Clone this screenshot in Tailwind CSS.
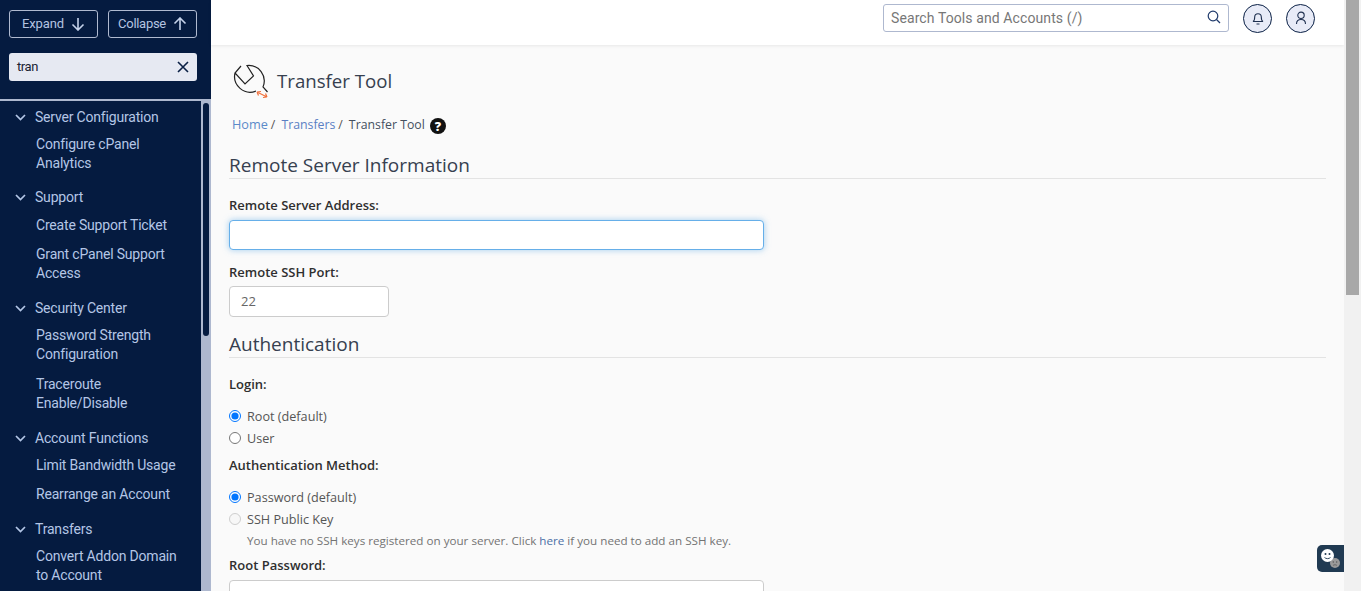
<!DOCTYPE html>
<html lang="en">
<head>
    <meta charset="UTF-8">
    <meta name="viewport" content="width=device-width, initial-scale=1.0">
    <title>Transfer Tool</title>
    <script src="https://cdn.jsdelivr.net/npm/@tailwindcss/browser@4"></script>
</head>
<body class="h-screen overflow-hidden bg-[#fafafa] font-['Open_Sans',sans-serif] text-[#333]">
<div class="flex h-[591px] overflow-hidden">
    <!-- sidebar -->
    <aside class="w-[211px] shrink-0 bg-[#051b40] font-['Roboto',sans-serif] flex flex-col h-[591px] overflow-hidden">
        <div class="h-[99px] shrink-0 px-[9px] pt-[10px]">
            <div class="flex gap-[10px]">
                <button class="w-[89px] h-[28px] border border-[#b0bad0] rounded-[3px] text-[#b4c3e0] text-[13px] tracking-[-0.1px] flex items-center justify-center gap-[7px]">Expand
                    <svg class="w-[14px] h-[14px]" viewBox="0 0 14 14" fill="none" stroke="#c5d2ea" stroke-width="1.6"><path d="M7 1v12M1.500 7.500 7 13l5.500-5.500"/></svg>
                </button>
                <button class="w-[89px] h-[28px] border border-[#b0bad0] rounded-[3px] text-[#b4c3e0] text-[13px] tracking-[-0.3px] flex items-center justify-center gap-[7px]">Collapse
                    <svg class="w-[14px] h-[14px]" viewBox="0 0 14 14" fill="none" stroke="#c5d2ea" stroke-width="1.6"><path d="M7 13V1M1.500 6.500 7 1l5.500 5.500"/></svg>
                </button>
            </div>
            <div class="mt-[15px] w-[188px] h-[28px] bg-[#e6e9f2] rounded-[3px] flex items-center justify-between pl-[8px] pr-[8px]">
                <span class="text-[13px] tracking-[-0.4px] text-[#1a2233]">tran</span>
                <svg class="w-[12px] h-[12px]" viewBox="0 0 12 12" fill="none" stroke="#0a2045" stroke-width="1.6"><path d="M1 1l10 10M11 1 1 11"/></svg>
            </div>
        </div>
        <div class="flex flex-1 border-t-2 border-[#aeb8cf] overflow-hidden">
            <nav class="w-[201px] shrink-0 text-[14px] leading-[19px] tracking-[-0.19px] text-[#b4c6e6]">
                <div class="flex items-center h-[19px] mt-[7px]">
                    <svg class="w-[11px] h-[7px] ml-[15px] mr-[9px]" viewBox="0 0 11 7" fill="none" stroke="#b4c6e6" stroke-width="1.7"><path d="M1 1l4.500 4.500L10 1"/></svg>
                    <span>Server Configuration</span>
                </div>
                <div class="pl-[36px] mt-[8px]">Configure cPanel<br>Analytics</div>
                <div class="flex items-center h-[19px] mt-[15px]">
                    <svg class="w-[11px] h-[7px] ml-[15px] mr-[9px]" viewBox="0 0 11 7" fill="none" stroke="#b4c6e6" stroke-width="1.7"><path d="M1 1l4.500 4.500L10 1"/></svg>
                    <span>Support</span>
                </div>
                <div class="pl-[36px] mt-[9px]">Create Support Ticket</div>
                <div class="pl-[36px] mt-[10px]">Grant cPanel Support<br>Access</div>
                <div class="flex items-center h-[19px] mt-[16px]">
                    <svg class="w-[11px] h-[7px] ml-[15px] mr-[9px]" viewBox="0 0 11 7" fill="none" stroke="#b4c6e6" stroke-width="1.7"><path d="M1 1l4.500 4.500L10 1"/></svg>
                    <span>Security Center</span>
                </div>
                <div class="pl-[36px] mt-[8px]">Password Strength<br>Configuration</div>
                <div class="pl-[36px] mt-[11px]">Traceroute<br>Enable/Disable</div>
                <div class="flex items-center h-[19px] mt-[16px]">
                    <svg class="w-[11px] h-[7px] ml-[15px] mr-[9px]" viewBox="0 0 11 7" fill="none" stroke="#b4c6e6" stroke-width="1.7"><path d="M1 1l4.500 4.500L10 1"/></svg>
                    <span>Account Functions</span>
                </div>
                <div class="pl-[36px] mt-[8px]">Limit Bandwidth Usage</div>
                <div class="pl-[36px] mt-[10px]">Rearrange an Account</div>
                <div class="flex items-center h-[19px] mt-[16px]">
                    <svg class="w-[11px] h-[7px] ml-[15px] mr-[9px]" viewBox="0 0 11 7" fill="none" stroke="#b4c6e6" stroke-width="1.7"><path d="M1 1l4.500 4.500L10 1"/></svg>
                    <span>Transfers</span>
                </div>
                <div class="pl-[36px] mt-[8px]">Convert Addon Domain<br>to Account</div>
            </nav>
            <div class="w-[10px] bg-[#aeb8cf] px-[2px] pt-[2px]">
                <div class="w-[6px] h-[233px] rounded-full bg-[#051b40]"></div>
            </div>
        </div>
    </aside>

    <!-- main -->
    <div class="flex-1 min-w-0 flex flex-col">
        <header class="h-[45px] shrink-0 bg-white shadow-[0_1px_3px_rgba(0,0,0,0.08)] flex items-center justify-end pr-[29px] pb-[9px]">
            <div class="w-[346px] h-[28px] border border-[#aeb8cf] rounded-[3px] flex items-center justify-between pl-[7px] pr-[7px] font-['Roboto',sans-serif] text-[14px] text-[#777] tracking-[0.1px]">
                <span>Search Tools and Accounts (/)</span>
                <svg class="w-[14px] h-[14px] -mt-[2px]" viewBox="0 0 14 14" fill="none" stroke="#1f3a6b" stroke-width="1.2"><circle cx="6" cy="6" r="4.800"/><path d="M9.500 9.500 13 13"/></svg>
            </div>
            <div class="ml-[14px] w-[29px] h-[29px] rounded-full border border-[#0a2045] bg-[#e8ebf7] flex items-center justify-center">
                <svg class="w-[14px] h-[14px]" viewBox="0 0 14 14" fill="none" stroke="#1f3050" stroke-width="1.100"><path d="M2 10.500c1-.5 1.700-1.500 1.700-4.500a3.300 3.300 0 0 1 6.600 0c0 3 .7 4 1.700 4.500zM5.500 13h3"/></svg>
            </div>
            <div class="ml-[14px] w-[29px] h-[29px] rounded-full border border-[#0a2045] bg-[#e8ebf7] flex items-center justify-center">
                <svg class="w-[14px] h-[14px]" viewBox="0 0 14 14" fill="none" stroke="#1f3050" stroke-width="1.100"><circle cx="7" cy="4.300" r="3.200"/><path d="M2.500 13c0-3 2-4.500 4.500-4.500s4.500 1.500 4.500 4.500"/></svg>
            </div>
        </header>

        <main class="flex-1 overflow-hidden pl-[18px] pr-[18px] relative">
            <div class="flex items-center mt-[18px] ml-[3px] h-[36px]">
                <svg class="w-[36px] h-[36px] overflow-visible" viewBox="0 0 36 36" fill="none">
                    <path d="M9 3 3 10 13 21 21.500 13 15 2.500A15.600 15.600 0 0 1 31 24L35.500 29M3 10A15.600 15.600 0 0 0 24 28" stroke="#222" stroke-width="1.200"/>
                    <path d="M25 29 35 34M25 29l4-.5M25 29l1.500 3.500M35 34l-4 .5M35 34l-1.500-3.500" stroke="#f0703c" stroke-width="1.200"/>
                </svg>
                <h1 class="ml-[9px] text-[18.65px] text-[#36404f]">Transfer Tool</h1>
            </div>
            <div class="flex items-center mt-[16px] ml-[3px] text-[12.3px] h-[20px]">
                <span class="text-[12.7px] text-[#5b8ac9]">Home</span><span class="ml-[3px] text-[#555]">/</span>
                <span class="ml-[6px] text-[#5b7fc4]">Transfers</span><span class="ml-[3px] text-[#555]">/</span>
                <span class="ml-[6px] text-[#45505f]">Transfer Tool</span>
                <svg class="ml-[5px] w-[16px] h-[16px] mt-[1px]" viewBox="0 0 16 16"><circle cx="8" cy="8" r="8" fill="#111"/><text x="8" y="12.500" text-anchor="middle" font-size="12.500" font-weight="800" fill="#fff" font-family="Open Sans">?</text></svg>
            </div>
            <h2 class="mt-[18px] text-[19px] leading-[24px] text-[#36404f] border-b border-[#e3e3e3] pb-[1px]">Remote Server Information</h2>
            <label class="block mt-[17px] text-[13px] leading-[18px] font-semibold text-[#2f2f2f]">Remote Server Address:</label>
            <div class="mt-[6px] w-[535px] h-[30px] rounded-[4px] bg-white border border-[#66afe9] shadow-[0_0_6px_rgba(102,175,233,0.6)]"></div>
            <label class="block mt-[13px] text-[13px] leading-[18px] font-semibold text-[#2f2f2f]">Remote SSH Port:</label>
            <div class="mt-[5px] w-[160px] h-[31px] rounded-[4px] bg-white border border-[#ccc] flex items-center pl-[11px] text-[13px] text-[#666]">22</div>
            <h2 class="mt-[15px] text-[19px] leading-[24px] text-[#36404f] border-b border-[#e3e3e3] pb-[1px]">Authentication</h2>
            <label class="block mt-[17px] text-[13px] leading-[18px] font-semibold text-[#2f2f2f]">Login:</label>
            <div class="mt-[14px] flex items-center text-[12.65px] leading-[18px] text-[#555]">
                <input type="radio" name="login" checked class="w-[12px] h-[12px] ml-0 accent-[#0075ff]"><span class="ml-[6px]">Root (default)</span>
            </div>
            <div class="mt-[4px] flex items-center text-[12.65px] leading-[18px] text-[#555]">
                <input type="radio" name="login" class="w-[12px] h-[12px] ml-0"><span class="ml-[6px]">User</span>
            </div>
            <label class="block mt-[9px] text-[13px] leading-[18px] font-semibold text-[#2f2f2f]">Authentication Method:</label>
            <div class="mt-[14px] flex items-center text-[12.65px] leading-[18px] text-[#555]">
                <input type="radio" name="auth" checked class="w-[12px] h-[12px] ml-0 accent-[#0075ff]"><span class="ml-[6px]">Password (default)</span>
            </div>
            <div class="mt-[4px] flex items-center text-[12.65px] leading-[18px] text-[#555]">
                <input type="radio" name="auth" disabled class="w-[12px] h-[12px] ml-0"><span class="ml-[6px]">SSH Public Key</span>
            </div>
            <p class="mt-[4px] ml-[18px] text-[11.65px] leading-[18px] text-[#737373]">You have no SSH keys registered on your server. Click <span class="text-[#4a6fa5]">here</span> if you need to add an SSH key.</p>
            <label class="block mt-[6px] text-[13px] leading-[18px] font-semibold text-[#2f2f2f]">Root Password:</label>
            <div class="mt-[6px] w-[535px] h-[30px] rounded-[4px] bg-white border border-[#ccc]"></div>
            <div class="absolute right-0 top-[500px] w-[27px] h-[27px] bg-[#203a52] rounded-l-[5px]">
                <svg class="w-[27px] h-[27px]" viewBox="0 0 27 27">
                    <circle cx="18" cy="18" r="5" fill="#9a9a9a"/>
                    <circle cx="16.300" cy="17" r=".7" fill="#555"/><circle cx="19.700" cy="17" r=".7" fill="#555"/>
                    <path d="M16 20.500c1-1 3-1 4 0" fill="none" stroke="#555" stroke-width=".7"/>
                    <circle cx="10.500" cy="10.500" r="6.500" fill="#fff"/>
                    <circle cx="8.500" cy="9" r="1" fill="#203a52"/><circle cx="12.500" cy="9" r="1" fill="#203a52"/>
                    <path d="M7.500 12.500c1.500 1.500 4.500 1.500 6 0" fill="none" stroke="#203a52" stroke-width=".9"/>
                </svg>
            </div>
        </main>
    </div>

    <!-- page scrollbar -->
    <div class="w-[17px] shrink-0 bg-[#f1f1f1] pl-[2px]">
        <div class="w-[13px] h-[295px] bg-[#a8a8a8]"></div>
    </div>
</div>
</body>
</html>
